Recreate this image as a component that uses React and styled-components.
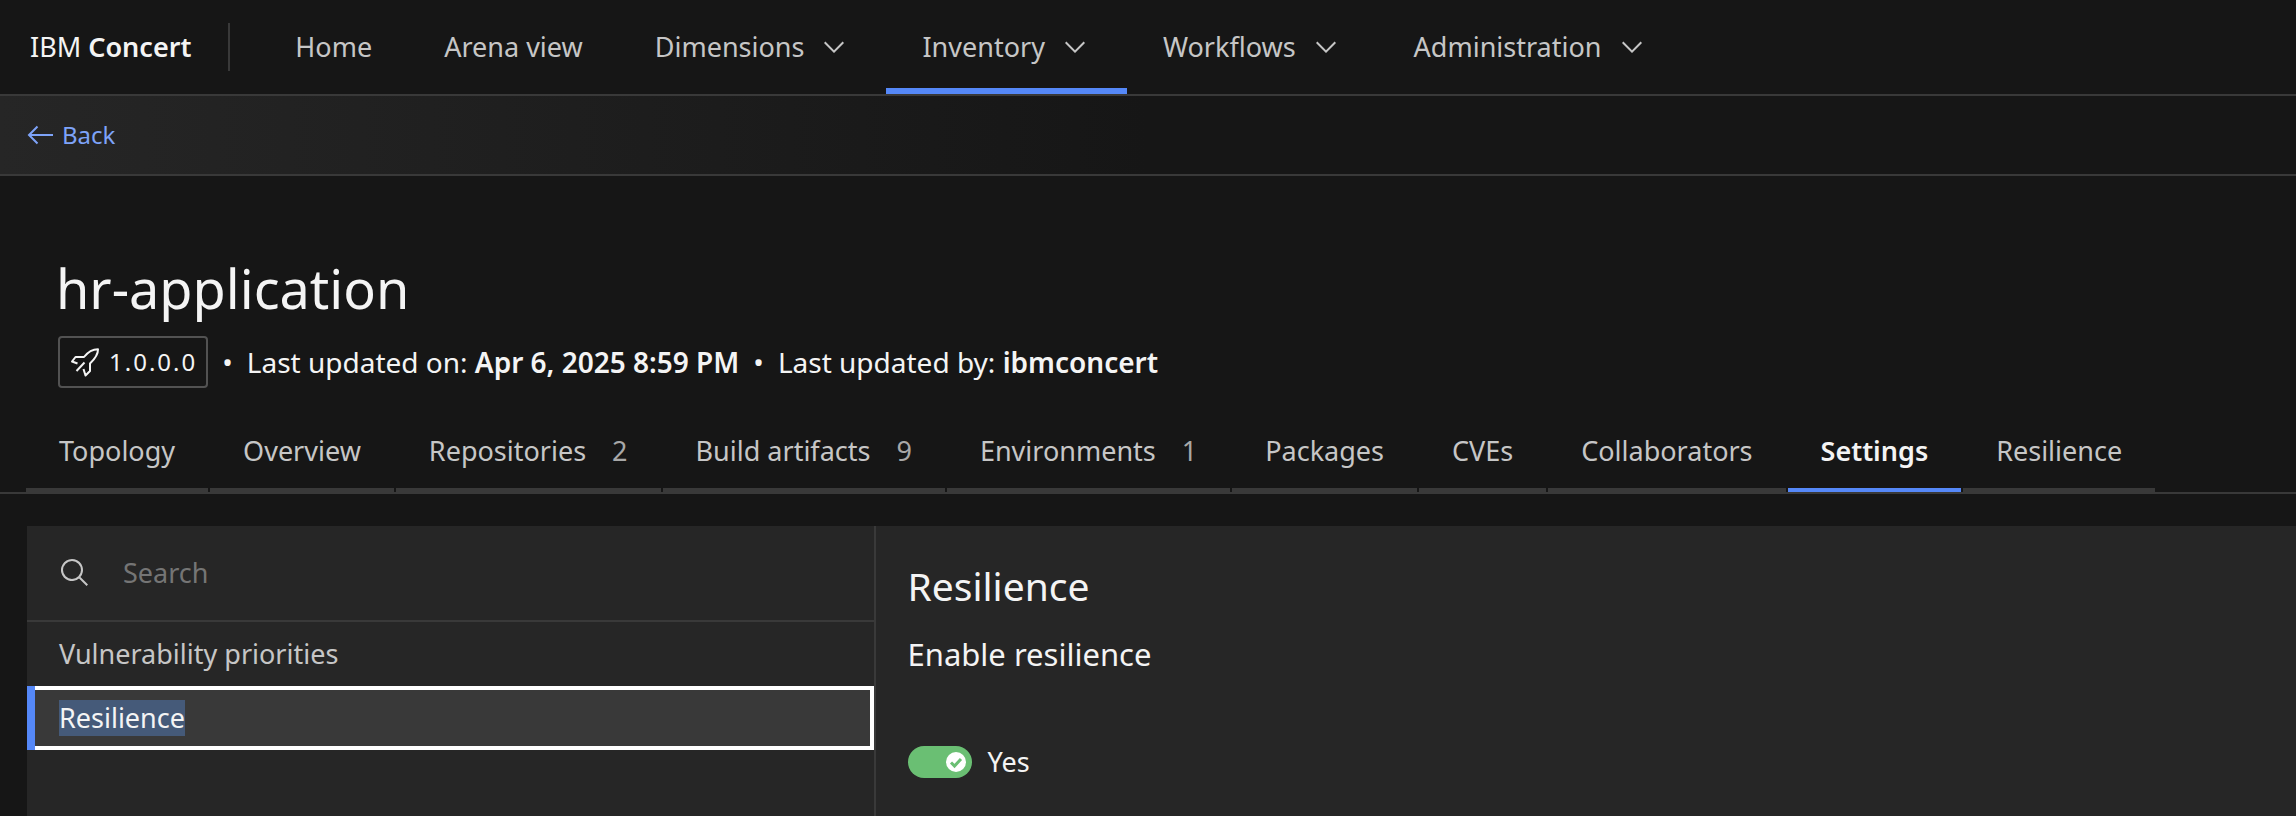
import React from "react";
import styled, { createGlobalStyle } from "styled-components";

const c = {
  bg: "#161616",
  layer: "#262626",
  line: "#393939",
  blue: "#5588f8",
  link: "#7ea3f8",
  text: "#f4f4f4",
  muted: "#c6c6c6",
  faint: "#a8a8a8",
  green: "#6abf73",
};

const Global = createGlobalStyle`
  *, *::before, *::after { box-sizing: border-box; }
  body {
    margin: 0;
    background: ${c.bg};
    color: ${c.text};
    font-family: "Noto Sans", sans-serif;
    font-size: 27px;
    line-height: 36px;
  }
  a { color: inherit; text-decoration: none; }
  button, input { font: inherit; color: inherit; border: 0; border-radius: 0; background: none; margin: 0; padding: 0; outline: 0; }
  h1, h2, p, ul { margin: 0; padding: 0; font-weight: 400; list-style: none; }
  svg { display: block; flex: none; }
`;

const Page = styled.div`
  min-height: 100vh;
  display: flex;
  flex-direction: column;
`;

const Header = styled.header`
  display: flex;
  align-items: center;
  height: 96px;
  padding-left: 30px;
  border-bottom: 2px solid ${c.line};
  white-space: nowrap;
`;

const Brand = styled.a`
  padding-right: 37px;
  b { font-weight: 600; }
`;

const Divider = styled.span`
  width: 2px;
  height: 48px;
  margin-right: 29px;
  background: ${c.line};
`;

const Nav = styled.nav`
  display: flex;
  align-self: stretch;
`;

const NavItem = styled.button`
  display: flex;
  align-items: center;
  gap: 14px;
  padding: 0 36px;
  color: ${c.muted};
  cursor: pointer;
  box-shadow: ${(p) => (p.$active ? `inset 0 -6px ${c.blue}` : "none")};
`;

const BackBar = styled.div`
  display: flex;
  align-items: center;
  height: 80px;
  padding-left: 24px;
  border-bottom: 2px solid ${c.line};
  background: linear-gradient(90deg, ${c.layer}, ${c.bg} 50%);
`;

const BackLink = styled.a`
  display: flex;
  align-items: center;
  gap: 6px;
  color: ${c.link};
  font-size: 24px;
`;

const Title = styled.h1`
  margin: 76px 0 12px;
  padding-left: 56px;
  font-size: 54px;
  line-height: 72px;
`;

const Meta = styled.div`
  display: flex;
  align-items: center;
  gap: 14px;
  padding-left: 58px;
  font-size: 28px;
  white-space: nowrap;
  b { font-weight: 600; }
`;

const Version = styled.span`
  display: flex;
  align-items: center;
  gap: 8px;
  height: 52px;
  padding: 0 9px;
  border: 2px solid #525252;
  border-radius: 4px;
  font-size: 24px;
  letter-spacing: 2px;
`;

const Tabs = styled.div`
  display: flex;
  gap: 2px;
  margin-top: 24px;
  padding-left: 26px;
  border-bottom: 2px solid ${c.line};
  white-space: nowrap;
`;

const Tab = styled.button`
  display: flex;
  align-items: center;
  gap: 26px;
  height: 80px;
  padding: 2px 33px 0;
  border-bottom: 4px solid ${(p) => (p.$active ? c.blue : c.line)};
  color: ${(p) => (p.$active ? c.text : c.muted)};
  font-weight: ${(p) => (p.$active ? 600 : 400)};
  cursor: pointer;
`;

const Count = styled.span`
  color: ${c.faint};
`;

const Panels = styled.main`
  flex: 1;
  display: grid;
  grid-template-columns: calc(37vw - 1px) 1fr;
  margin: 32px 0 0 27px;
  background: ${c.layer};
`;

const Side = styled.aside`
  border-right: 2px solid ${c.line};
`;

const SearchBox = styled.label`
  display: flex;
  align-items: center;
  gap: 32px;
  height: 96px;
  padding-left: 32px;
  border-bottom: 2px solid ${c.line};
  color: ${c.muted};
`;

const SearchInput = styled.input`
  flex: 1;
  min-width: 0;
  &::placeholder { color: #757575; opacity: 1; }
`;

const SideItem = styled.button`
  display: flex;
  align-items: center;
  width: 100%;
  height: 64px;
  padding-left: ${(p) => (p.$active ? "24px" : "32px")};
  color: ${(p) => (p.$active ? c.text : c.muted)};
  cursor: pointer;
  ${(p) => p.$active && `
    border-left: 8px solid ${c.blue};
    background: ${c.line};
    box-shadow: inset 0 4px #fff, inset 0 -4px #fff, inset -4px 0 #fff;
  `}
`;

const Highlight = styled.mark`
  background: #455a79;
  color: inherit;
`;

const Detail = styled.section`
  padding: 36px 32px 16px;
`;

const Heading = styled.h2`
  font-size: 39px;
  line-height: 48px;
`;

const Sub = styled.p`
  margin: 24px 0 64px;
  font-size: 31px;
  line-height: 40px;
`;

const ToggleRow = styled.label`
  display: flex;
  align-items: center;
  gap: 16px;
  height: 48px;
  cursor: pointer;
`;

const Switch = styled.span`
  position: relative;
  display: flex;
  align-items: center;
  justify-content: flex-end;
  width: 64px;
  height: 32px;
  padding-right: 6px;
  border-radius: 16px;
  background: ${c.green};
`;

const SwitchInput = styled.input`
  position: absolute;
  inset: 0;
  opacity: 0;
  cursor: pointer;
`;

const Chevron = () => (
  <svg width="32" height="32" viewBox="0 0 16 16" fill="currentColor" aria-hidden="true">
    <path d="M8 11 3 6 3.7 5.3 8 9.6 12.3 5.3 13 6z" />
  </svg>
);

const ArrowLeft = () => (
  <svg width="32" height="32" viewBox="0 0 32 32" fill="none" stroke="currentColor" strokeWidth="2" aria-hidden="true">
    <path d="M29 16H5M13.500 7.500 5 16 13.500 24.500" />
  </svg>
);

const SearchIcon = () => (
  <svg width="32" height="32" viewBox="0 0 32 32" fill="currentColor" aria-hidden="true">
    <path d="M29 27.586l-7.552-7.552a11.018 11.018 0 1 0-1.414 1.414L27.586 29zM4 13a9 9 0 1 1 9 9 9.01 9.01 0 0 1-9-9z" />
  </svg>
);

const Rocket = () => (
  <svg width="32" height="32" viewBox="0 0 32 32" fill="none" stroke="currentColor" strokeWidth="2" strokeLinejoin="round" aria-hidden="true">
    <path d="M8.500 17.500 3 15.500 6.500 11H15C18.500 6.500 23 3.200 29 3.200c.2 5.800-3.500 10-8 14.300V25l-4.500 4.500-2-6.500M15.500 16.500 7.500 25" />
  </svg>
);

const Check = () => (
  <svg width="20" height="20" viewBox="0 0 20 20" fill="none" aria-hidden="true">
    <circle cx="10" cy="10" r="10" fill="#fff" />
    <path d="M5 10.500 8.500 14 15 7" stroke={c.green} strokeWidth="3" />
  </svg>
);

const NAV = [
  ["Home"],
  ["Arena view"],
  ["Dimensions", true],
  ["Inventory", true],
  ["Workflows", true],
  ["Administration", true],
];

const TABS = [
  ["Topology"],
  ["Overview"],
  ["Repositories", 2],
  ["Build artifacts", 9],
  ["Environments", 1],
  ["Packages"],
  ["CVEs"],
  ["Collaborators"],
  ["Settings"],
  ["Resilience"],
];

export default function App() {
  return (
    <Page>
      <Global />
      <Header>
        <Brand href="#">IBM <b>Concert</b></Brand>
        <Divider />
        <Nav>
          {NAV.map(([name, menu]) => (
            <NavItem key={name} $active={name === "Inventory"}>
              {name}
              {menu && <Chevron />}
            </NavItem>
          ))}
        </Nav>
      </Header>
      <BackBar>
        <BackLink href="#"><ArrowLeft />Back</BackLink>
      </BackBar>
      <Title>hr-application</Title>
      <Meta>
        <Version><Rocket />1.0.0.0</Version>
        <span>•</span>
        <span>Last updated on: <b>Apr 6, 2025 8:59 PM</b></span>
        <span>•</span>
        <span>Last updated by: <b>ibmconcert</b></span>
      </Meta>
      <Tabs role="tablist">
        {TABS.map(([name, count]) => (
          <Tab key={name} role="tab" aria-selected={name === "Settings"} $active={name === "Settings"}>
            {name}
            {count && <Count>{count}</Count>}
          </Tab>
        ))}
      </Tabs>
      <Panels>
        <Side>
          <SearchBox>
            <SearchIcon />
            <SearchInput type="text" placeholder="Search" aria-label="Search" />
          </SearchBox>
          <SideItem>Vulnerability priorities</SideItem>
          <SideItem $active><Highlight>Resilience</Highlight></SideItem>
        </Side>
        <Detail>
          <Heading>Resilience</Heading>
          <Sub>Enable resilience</Sub>
          <ToggleRow>
            <Switch>
              <SwitchInput type="checkbox" role="switch" defaultChecked />
              <Check />
            </Switch>
            Yes
          </ToggleRow>
        </Detail>
      </Panels>
    </Page>
  );
}
